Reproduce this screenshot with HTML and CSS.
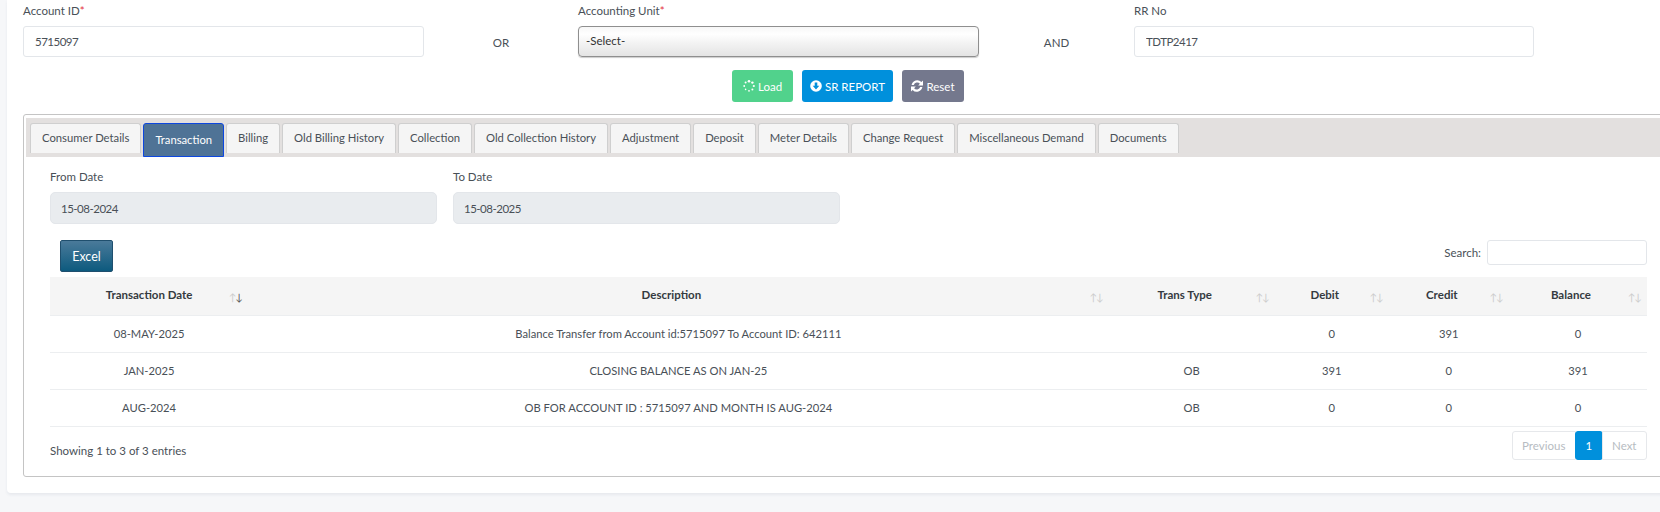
FILE: index.html
```html
<!DOCTYPE html>
<html lang="en">
<head>
<meta charset="utf-8">
<title>Transaction</title>
<link rel="stylesheet" href="styles.css">
</head>
<body>
<main class="card">
  <section class="search-row">
    <div class="field"><label class="lbl">Account ID<span class="req">*</span></label><input class="ctl" value="5715097"></div>
    <div class="conn">OR</div>
    <div class="field"><label class="lbl">Accounting Unit<span class="req">*</span></label><div class="select">-Select-</div></div>
    <div class="conn">AND</div>
    <div class="field"><label class="lbl">RR No</label><input class="ctl" value="TDTP2417"></div>
  </section>
  <div class="actions">
    <button class="btn green">
      <svg class="ic" viewBox="0 0 12 12"><g fill="#fff"><circle cx="6" cy="1.3" r="1.3"/><circle cx="9.4" cy="2.6" r="1.2"/><circle cx="10.8" cy="6" r="1.1"/><circle cx="9.4" cy="9.4" r="1"/><circle cx="6" cy="10.8" r=".9"/><circle cx="2.6" cy="9.4" r=".8"/><circle cx="1.2" cy="6" r=".9"/><circle cx="2.6" cy="2.6" r="1"/></g></svg>Load</button>
    <button class="btn blue">
      <svg class="ic" viewBox="0 0 12 12"><circle cx="6" cy="6" r="5.8" fill="#fff"/><path d="M4.7 2.4h2.6v3.3h2L6 9.6 2.7 5.7h2z" fill="#0090dc"/></svg>SR REPORT</button>
    <button class="btn grey">
      <svg class="ic" viewBox="0 0 12 12"><path d="M12 .6v4.8H7.2l1.7-1.7A3.6 3.6 0 0 0 2.8 5H.6a5.7 5.7 0 0 1 9.8-2.9z" fill="#fff"/><path d="M0 11.4V6.6h4.8L3.1 8.3A3.6 3.6 0 0 0 9.2 7h2.2a5.7 5.7 0 0 1-9.8 2.9z" fill="#fff"/></svg>Reset</button>
  </div>
  <section class="panel">
    <nav class="tabs">
      <a class="tab">Consumer Details</a><a class="tab active">Transaction</a><a class="tab">Billing</a><a class="tab">Old Billing History</a><a class="tab">Collection</a><a class="tab">Old Collection History</a><a class="tab">Adjustment</a><a class="tab">Deposit</a><a class="tab">Meter Details</a><a class="tab">Change Request</a><a class="tab">Miscellaneous Demand</a><a class="tab">Documents</a>
    </nav>
    <div class="tab-body">
      <div class="dates">
        <div class="field"><label class="lbl">From Date</label><input class="ctl ro" value="15-08-2024" readonly></div>
        <div class="field"><label class="lbl">To Date</label><input class="ctl ro" value="15-08-2025" readonly></div>
      </div>
      <div class="tools">
        <button class="excel">Excel</button>
        <label class="search">Search:<input class="search-in"></label>
      </div>
      <table class="grid">
        <colgroup><col class="c1"><col class="c2"><col class="c3"><col class="c4"><col class="c5"><col class="c6"></colgroup>
        <thead><tr>
          <th class="first">Transaction Date<span class="sort"><span class="on-none">↑</span><span class="on">↓</span></span></th>
          <th>Description<span class="sort">↑↓</span></th>
          <th>Trans Type<span class="sort">↑↓</span></th>
          <th>Debit<span class="sort">↑↓</span></th>
          <th>Credit<span class="sort">↑↓</span></th>
          <th>Balance<span class="sort">↑↓</span></th>
        </tr></thead>
        <tbody>
          <tr><td>08-MAY-2025</td><td>Balance Transfer from Account id:5715097 To Account ID: 642111</td><td></td><td>0</td><td>391</td><td>0</td></tr>
          <tr><td>JAN-2025</td><td>CLOSING BALANCE AS ON JAN-25</td><td>OB</td><td>391</td><td>0</td><td>391</td></tr>
          <tr><td>AUG-2024</td><td>OB FOR ACCOUNT ID : 5715097 AND MONTH IS AUG-2024</td><td>OB</td><td>0</td><td>0</td><td>0</td></tr>
        </tbody>
      </table>
      <div class="foot">
        <div class="info">Showing 1 to 3 of 3 entries</div>
        <div class="pager"><a class="pg">Previous</a><a class="pg cur">1</a><a class="pg">Next</a></div>
      </div>
    </div>
  </section>
</main>
</body>
</html>
```
FILE: styles.css
```css
* { box-sizing: border-box; }
html, body { margin: 0; height: 100%; overflow: hidden; }
body {
  background: #f6f7f9;
  font-family: "Lato", "Noto Sans", sans-serif;
  font-size: 11.5px;
  color: #495057;
}
.card {
  margin-left: 7px;
  width: 1700px;
  height: 493px;
  padding: 0 0 0 16px;
  background: #fff;
  border-radius: 0 0 0 4px;
  box-shadow: 0 2px 3px rgba(60, 80, 110, .08);
}
.search-row {
  display: grid;
  grid-template-columns: 401px 154px 401px 155px 400px;
  align-items: start;
}
.lbl { display: block; height: 26px; padding-top: 3px; line-height: 16px; color: #495057; }
.req { color: #e5343d; }
.ctl {
  display: block;
  width: 100%;
  height: 31px;
  padding: 0 11px;
  border: 1px solid #e3e6ea;
  border-radius: 3px;
  background: #fff;
  font: inherit;
  letter-spacing: -.5px;
  color: #495057;
}
.ro { background: #e9ecef; height: 32px; border-radius: 5px; padding: 0 10px; }
.conn { padding-top: 35px; text-align: center; line-height: 16px; color: #495057; }
.select {
  height: 31px;
  padding: 0 7px;
  line-height: 27px;
  border: 1px solid #8f8f8f;
  border-radius: 4px;
  background: linear-gradient(#f7f7f7 0, #fff 25%, #f3f3f3 55%, #e4e4e4 100%);
  box-shadow: 0 1px 1px rgba(0,0,0,.2);
  color: #333;
}
.actions { display: flex; gap: 9px; margin: 13px 0 0 709px; height: 32px; }
.btn {
  display: inline-flex;
  align-items: center;
  justify-content: center;
  gap: 3px;
  height: 32px;
  padding: 0;
  border: 0;
  border-radius: 3px;
  color: #fff;
  font: inherit;
  white-space: nowrap;
}
.ic { width: 12px; height: 12px; flex: none; }
.green { background: #51d28c; width: 61px; }
.blue { background: #0090dc; width: 91px; }
.grey { background: #74788d; width: 62px; }
.panel {
  margin-top: 12px;
  height: 363px;
  border: 1px solid #c4c4c4;
  border-radius: 3px 0 0 3px;
  padding: 3px 0 0 2px;
}
.tabs {
  display: flex;
  gap: 2px;
  height: 39px;
  padding: 5px 0 0 4px;
  background: #e3e0df;
  align-items: flex-start;
}
.tab {
  height: 30px;
  padding: 0 11px;
  line-height: 28px;
  background: #f5f5f5;
  border: 1px solid #cfcfcf;
  border-bottom: 0;
  border-radius: 3px 3px 0 0;
  font-size: 11.25px;
  color: #495057;
}
.tab.active { background: #4f7396; color: #fff; border: 1px solid #0d47e0; height: 34px; line-height: 31px; }
.tab-body { padding: 9px 0 0 24px; width: 1621px; }
.dates { display: flex; gap: 16px; }
.dates .field { width: 387px; }
.tools { display: flex; justify-content: space-between; margin-top: 16px; height: 33px; }
.excel {
  margin-left: 10px;
  width: 53px;
  height: 32px;
  border: 1px solid #1f4f6e;
  border-radius: 2px;
  background: linear-gradient(#4a7a9a, #0d5a7e);
  color: #fff;
  font: inherit;
  font-size: 12.5px;
}
.search { display: flex; align-items: center; gap: 6px; height: 25px; color: #495057; }
.search-in { width: 160px; height: 25px; border: 1px solid #e3e6ea; border-radius: 3px; }
.grid { width: 100%; border-collapse: collapse; table-layout: fixed; margin-top: 4px; }
.c1 { width: 198px; }
.c2 { width: 860px; }
.c3 { width: 166px; }
.c4 { width: 114px; }
.c5 { width: 120px; }
.c6 { width: 138px; }
.grid th {
  position: relative;
  height: 38px;
  padding: 0 14px 3px 0;
  background: #f5f5f5;
  border-bottom: 1px solid #eceef0;
  font-weight: 700;
  text-align: center;
  color: #343a40;
}
.grid th.first { padding-right: 0; }
.grid td {
  height: 37px;
  padding: 0;
  border-bottom: 1px solid #eceef0;
  font-size: 11.2px;
  text-align: center;
  color: #495057;
}
.sort { position: absolute; right: 6px; top: 14px; font-size: 10px; font-weight: 400; color: #ccc; letter-spacing: -1px; }
.on { color: #555; }
.on-none { color: #ccc; }
.foot { display: flex; justify-content: space-between; align-items: flex-start; padding-top: 4px; }
.info { padding-top: 13px; color: #495057; }
.pager { display: flex; }
.pg {
  height: 29px;
  padding: 0 9.5px;
  line-height: 27px;
  border: 1px solid #e6e8eb;
  margin-left: -1px;
  color: #b7bcc2;
}
.pg:first-child { border-radius: 3px 0 0 3px; }
.pg:last-child { border-radius: 0 3px 3px 0; }
.cur { background: #0090dc; border-color: #0090dc; color: #fff; border-radius: 3px; }
```
